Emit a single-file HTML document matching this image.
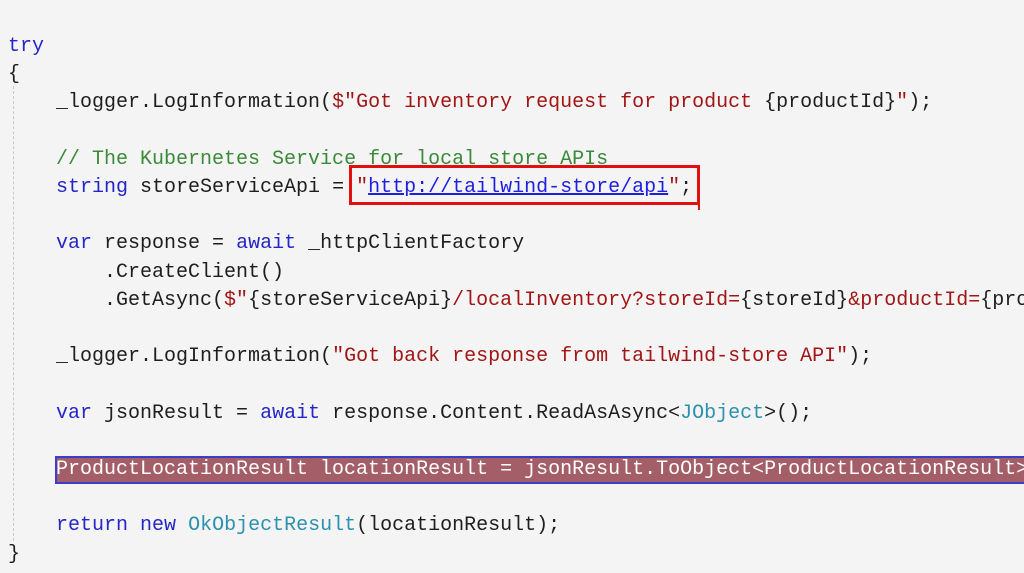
<!DOCTYPE html>
<html><head><style>
body{margin:0;width:1024px;height:573px;background:#f4f4f4;overflow:hidden;position:relative;font-family:"Liberation Mono",monospace;font-size:20px;}
.c{position:absolute;left:8px;top:33px;width:1016px;overflow:hidden;white-space:pre;line-height:28.2px;color:#1e1e1e;}
.k{color:#2626c8}.s{color:#a31515}.g{color:#3a8a3a}.t{color:#2b91af}.u{color:#1f1fe0;text-decoration:underline}
.hl{position:absolute;left:55px;top:456px;width:969px;height:28px;background:#a35e67;border:2px solid #3d3dcc;border-right:none;box-sizing:border-box;}
.guide{position:absolute;left:13px;top:86px;height:455px;border-left:1px dashed #c8c8c8;}
.red{position:absolute;left:349px;top:165px;width:351px;height:40px;border:3px solid #e01010;box-sizing:border-box;}
.redl{position:absolute;left:698px;top:200px;width:2px;height:10px;background:#e01010;}
</style></head><body>
<div class="guide"></div>
<div class="hl"></div>
<div class="c"><span class="k">try</span>
{
    _logger.LogInformation(<span class="s">$"Got inventory request for product </span>{productId}<span class="s">"</span>);

    <span class="g">// The Kubernetes Service for local store APIs</span>
    <span class="k">string</span> storeServiceApi = <span class="s">"</span><span class="u">http://tailwind-store/api</span><span class="s">"</span>;

    <span class="k">var</span> response = <span class="k">await</span> _httpClientFactory
        .CreateClient()
        .GetAsync(<span class="s">$"</span>{storeServiceApi}<span class="s">/localInventory?storeId=</span>{storeId}<span class="s">&amp;productId=</span>{pro

    _logger.LogInformation(<span class="s">"Got back response from tailwind-store API"</span>);

    <span class="k">var</span> jsonResult = <span class="k">await</span> response.Content.ReadAsAsync&lt;<span class="t">JObject</span>&gt;();

<span style="color:#fff">    ProductLocationResult locationResult = jsonResult.ToObject&lt;ProductLocationResult&gt;</span>

    <span class="k">return</span> <span class="k">new</span> <span class="t">OkObjectResult</span>(locationResult);
}</div>
<div class="red"></div><div class="redl"></div>
</body></html>
